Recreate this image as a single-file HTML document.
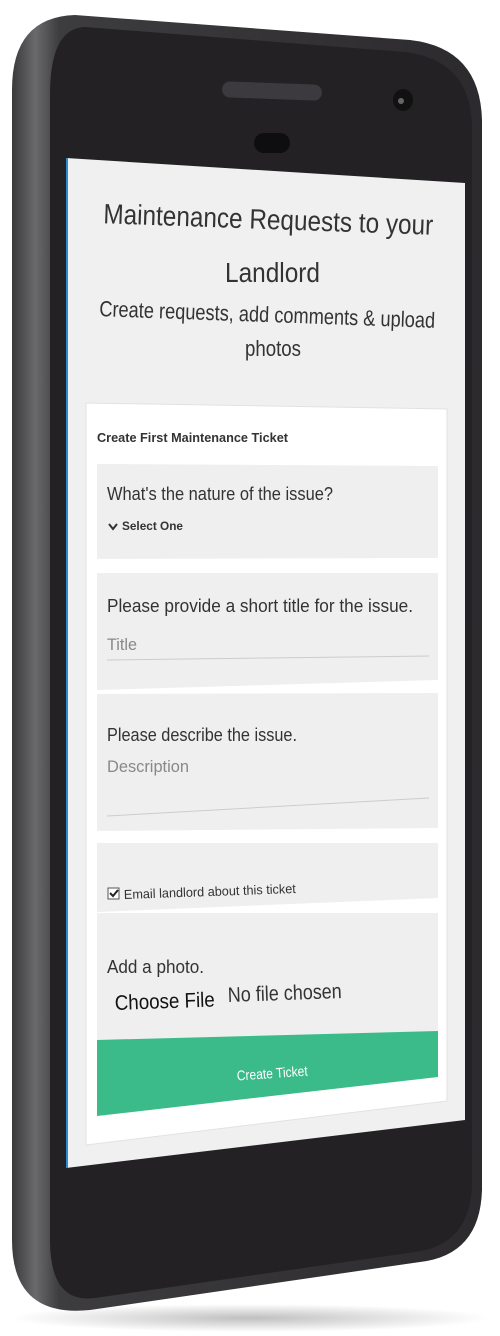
<!DOCTYPE html>
<html><head><meta charset="utf-8"><style>
html,body{margin:0;padding:0;background:#fff;width:500px;height:1336px;overflow:hidden}
svg{display:block}
text{font-family:"Liberation Sans",sans-serif}
</style></head><body>
<svg width="500" height="1336" viewBox="0 0 500 1336">
<defs>
<linearGradient id="fr" x1="0" x2="1" y1="0" y2="0">
<stop offset="0" stop-color="#3a393b"/><stop offset="0.05" stop-color="#6a696b"/><stop offset="0.1" stop-color="#3d3c3e"/><stop offset="1" stop-color="#2c2a2d"/>
</linearGradient>
<radialGradient id="sh" cx="0.5" cy="0.5" r="0.5"><stop offset="0" stop-color="#000" stop-opacity="0.25"/><stop offset="1" stop-color="#000" stop-opacity="0"/></radialGradient>
</defs>
<ellipse cx="250" cy="1318" rx="240" ry="14" fill="url(#sh)"/>
<rect x="12" y="326" width="16" height="94" rx="4" fill="#3a393b"/>
<rect x="12" y="530" width="16" height="184" rx="4" fill="#3a393b"/>
<path d="M75 15 L410 40 Q480 48 482 120 L482 1190 Q480 1255 420 1262 L90 1310 Q12 1318 12 1240 L12 90 Q12 17 75 15 Z" fill="url(#fr)"/>
<path d="M85 27 L405 52 Q470 60 472 125 L472 1185 Q470 1245 415 1252 L95 1298 Q50 1304 50 1240 L50 95 Q50 28 85 27 Z" fill="#242125"/>
<rect x="222" y="83" width="100" height="16" rx="8" fill="#3c3a3e" transform="rotate(2 272 91)"/>
<ellipse cx="403" cy="100" rx="10" ry="11" fill="#111"/><circle cx="401" cy="101" r="3" fill="#666"/>
<rect x="254" y="133" width="36" height="20" rx="10" fill="#0e0d0f"/>
<polygon points="66,158 465,183 465,1120 66,1168" fill="#f0f0f0"/>
<line x1="67" y1="158" x2="67" y2="1168" stroke="#2a8ad0" stroke-width="2"/>
<polygon points="86,403 447,409 447,1101 86,1145" fill="#fff" stroke="#e2e2e2"/>
<polygon points="97,464 438,466 438,558 97,559" fill="#efefef"/>
<polygon points="97,573 438,573 438,680 97,690" fill="#efefef"/>
<polygon points="97,694 438,693 438,828 97,831" fill="#efefef"/>
<polygon points="97,843 438,843 438,898 97,912" fill="#efefef"/>
<polygon points="97,913 438,913 438,1035 97,1052" fill="#efefef"/>
<polygon points="97,1040 438,1031 438,1077 97,1116" fill="#3bbb8a"/>
<g fill="#333" lengthAdjust="spacingAndGlyphs">
<text x="103" y="229" font-size="28" textLength="330" lengthAdjust="spacingAndGlyphs" transform="rotate(2 268 229)">Maintenance Requests to your</text>
<text x="225" y="282" font-size="28" textLength="95" lengthAdjust="spacingAndGlyphs">Landlord</text>
<text x="99" y="322" font-size="22" textLength="336" lengthAdjust="spacingAndGlyphs" transform="rotate(2 267 322)">Create requests, add comments &amp; upload</text>
<text x="245" y="356" font-size="22" textLength="56" lengthAdjust="spacingAndGlyphs">photos</text>
<text x="97" y="442" font-size="13" font-weight="bold" textLength="191" lengthAdjust="spacingAndGlyphs">Create First Maintenance Ticket</text>
<text x="107" y="500" font-size="18" textLength="226" lengthAdjust="spacingAndGlyphs">What's the nature of the issue?</text>
<path d="M109 524 l4 5 l4 -5" stroke="#333" stroke-width="2" fill="none"/>
<text x="122" y="530" font-size="12" font-weight="bold" textLength="61" lengthAdjust="spacingAndGlyphs">Select One</text>
<text x="107" y="612" font-size="18" textLength="306" lengthAdjust="spacingAndGlyphs">Please provide a short title for the issue.</text>
<text x="107" y="650" font-size="17" fill="#888" textLength="30" lengthAdjust="spacingAndGlyphs">Title</text>
<line x1="107" y1="660" x2="429" y2="656" stroke="#ccc"/>
<text x="107" y="741" font-size="18" textLength="190" lengthAdjust="spacingAndGlyphs">Please describe the issue.</text>
<text x="107" y="772" font-size="17" fill="#888" textLength="82" lengthAdjust="spacingAndGlyphs">Description</text>
<line x1="107" y1="816" x2="429" y2="798" stroke="#ccc"/>
<rect x="108" y="888" width="11" height="11" fill="#fff" stroke="#555"/>
<path d="M110 893 l3 3 l5 -6" stroke="#222" stroke-width="2" fill="none"/>
<text x="124" y="899" font-size="13" textLength="172" lengthAdjust="spacingAndGlyphs" transform="rotate(-2 124 899)">Email landlord about this ticket</text>
<text x="107" y="973" font-size="18" textLength="97" lengthAdjust="spacingAndGlyphs">Add a photo.</text>
<text x="115" y="1010" font-size="21" fill="#111" textLength="100" lengthAdjust="spacingAndGlyphs" transform="rotate(-2 115 1010)">Choose File</text>
<text x="228" y="1002" font-size="21" textLength="114" lengthAdjust="spacingAndGlyphs" transform="rotate(-2 228 1002)">No file chosen</text>
<text x="237" y="1078" font-size="14" fill="#fff" textLength="71" lengthAdjust="spacingAndGlyphs" transform="rotate(-4 273 1078)">Create Ticket</text>
</g>
</svg>
</body></html>
